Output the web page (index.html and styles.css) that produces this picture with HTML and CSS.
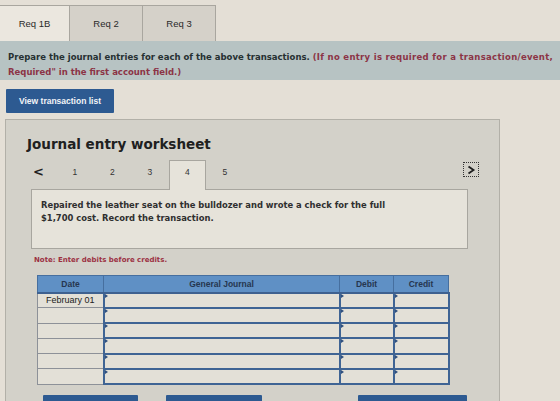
FILE: index.html
```html
<!DOCTYPE html>
<html lang="en">
<head>
<meta charset="utf-8">
<title>Journal entry worksheet</title>
<link rel="stylesheet" href="styles.css">
</head>
<body>
<div class="page">
  <nav class="req-tabs">
    <div class="req-tab active">Req 1B</div>
    <div class="req-tab">Req 2</div>
    <div class="req-tab">Req 3</div>
  </nav>

  <div class="instructions">
    <div class="line"><span class="lead">Prepare the journal entries for each of the above transactions.</span> <span class="hint wide">(If no entry is required for a transaction/event,</span></div>
    <div class="line"><span class="hint">Required" in the first account field.)</span></div>
  </div>

  <button class="btn-primary" type="button">View transaction list</button>

  <section class="worksheet">
    <h2 class="ws-title">Journal entry worksheet</h2>

    <div class="ws-nav">
      <span class="ws-prev">&lt;</span>
      <span class="ws-step">1</span>
      <span class="ws-step">2</span>
      <span class="ws-step">3</span>
      <span class="ws-step current">4</span>
      <span class="ws-step">5</span>
      <span class="ws-next">
        <svg width="10" height="10" viewBox="0 0 10 10"><path d="M2.5 1.5 L7.5 5 L2.5 8.5" fill="none" stroke="#1d1d1d" stroke-width="1.8"/></svg>
      </span>
    </div>

    <div class="ws-desc">
      Repaired the leather seat on the bulldozer and wrote a check for the full<br>
      $1,700 cost. Record the transaction.
    </div>

    <p class="ws-note">Note: Enter debits before credits.</p>

    <table class="journal">
      <colgroup>
        <col class="c-date"><col class="c-acct"><col class="c-num"><col class="c-num2">
      </colgroup>
      <thead>
        <tr><th>Date</th><th>General Journal</th><th>Debit</th><th>Credit</th></tr>
      </thead>
      <tbody>
        <tr><td class="date">February 01</td><td class="in"></td><td class="in"></td><td class="in"></td></tr>
        <tr><td class="date"></td><td class="in"></td><td class="in"></td><td class="in"></td></tr>
        <tr><td class="date"></td><td class="in"></td><td class="in"></td><td class="in"></td></tr>
        <tr><td class="date"></td><td class="in"></td><td class="in"></td><td class="in"></td></tr>
        <tr><td class="date"></td><td class="in"></td><td class="in"></td><td class="in"></td></tr>
        <tr><td class="date"></td><td class="in"></td><td class="in"></td><td class="in"></td></tr>
      </tbody>
    </table>

    <div class="ws-actions">
      <span class="act act-a"></span>
      <span class="act act-b"></span>
      <span class="act act-c"></span>
    </div>
  </section>
</div>
</body>
</html>
```

FILE: styles.css
```css
* { box-sizing: border-box; }

html, body {
  margin: 0;
  padding: 0;
}

body {
  width: 560px;
  height: 401px;
  overflow: hidden;
  background: #e4dfd6;
  font-family: "DejaVu Sans", Verdana, sans-serif;
  color: #222;
}

.page {
  width: 560px;
}

/* requirement tabs */
.req-tabs {
  display: flex;
  padding-top: 5px;
  height: 41px;
}

.req-tab {
  width: 74px;
  height: 36px;
  display: flex;
  align-items: center;
  justify-content: center;
  font-family: "Liberation Sans", Arial, sans-serif;
  font-size: 9.5px;
  color: #2a2a2a;
  background: #d5d1c9;
  border: 1px solid #a9a69f;
  border-bottom: none;
  margin-left: -1px;
}

.req-tab.active {
  width: 71px;
  background: #ebe7df;
}

/* instruction strip */
.instructions {
  width: 560px;
  height: 39px;
  padding: 9px 0 0 8px;
  background: #b7c3c3;
  font-size: 8.5px;
  font-weight: bold;
  line-height: 15px;
}

.instructions .line {
  white-space: nowrap;
}

.lead { color: #263032; }
.hint { color: #8c3446; }
.hint.wide { letter-spacing: 0.3px; }

.btn-primary {
  display: block;
  margin: 9px 0 0 6px;
  width: 108px;
  height: 24px;
  padding: 0;
  border: none;
  border-radius: 1px;
  background: #2d5a91;
  color: #f2f4f7;
  font-family: "Liberation Sans", Arial, sans-serif;
  font-weight: bold;
  font-size: 8.5px;
}

/* worksheet panel */
.worksheet {
  margin: 6px 0 0 5px;
  width: 495px;
  height: 300px;
  padding: 15px 0 0 25px;
  background: #d3d1c9;
  border: 1px solid #b2b0a8;
}

.ws-title {
  margin: 0 0 0 -4px;
  font-size: 13.5px;
  line-height: 18px;
  font-weight: bold;
  color: #202020;
}

.ws-nav {
  display: flex;
  align-items: stretch;
  width: 448px;
  height: 29px;
  margin-top: 7px;
  font-family: "Liberation Sans", Arial, sans-serif;
  font-size: 8.5px;
  color: #333;
}

.ws-prev {
  width: 25px;
  padding: 5px 0 0 2px;
  font-family: "DejaVu Sans", sans-serif;
  font-size: 13px;
  line-height: 14px;
  font-weight: bold;
  color: #222;
}

.ws-step {
  width: 37.5px;
  padding-top: 7px;
  text-align: center;
  line-height: 10px;
}

.ws-step.current {
  background: #e6e3da;
  border: 1px solid #a8a69f;
  border-bottom: none;
  padding-top: 6px;
  position: relative;
  z-index: 1;
  margin-bottom: -1px;
}

.ws-next {
  margin-left: auto;
  margin-top: 2px;
  align-self: flex-start;
  width: 16px;
  height: 15px;
  display: flex;
  align-items: center;
  justify-content: center;
  border: 1.5px dotted #333;
}

.ws-desc {
  width: 437px;
  height: 60px;
  padding: 9px 9px 0;
  background: #e6e3da;
  border: 1px solid #a8a69f;
  font-size: 8.4px;
  font-weight: bold;
  line-height: 13px;
  color: #2f2f2f;
}

.ws-note {
  margin: 5px 0 0 3px;
  font-size: 7px;
  line-height: 12px;
  font-weight: bold;
  color: #9c3042;
}

/* journal grid */
.journal {
  margin: 9px 0 0 6px;
  width: 411px;
  border-collapse: collapse;
  table-layout: fixed;
  font-family: "Liberation Sans", Arial, sans-serif;
}

.c-date { width: 66px; }
.c-acct { width: 236px; }
.c-num { width: 54px; }
.c-num2 { width: 55px; }

.journal th {
  height: 17px;
  padding: 0;
  background: #5f90c5;
  color: #26364f;
  font-size: 8.5px;
  font-weight: bold;
  border: 1px solid #466f9f;
  border-bottom: 2px solid #3e6190;
}

.journal td {
  height: 15.3px;
  padding: 0;
  background: #e3e0d7;
}

.journal td.date {
  border: 1px solid #8d9198;
  font-size: 9px;
  color: #222;
  text-align: center;
}

.journal td.in {
  position: relative;
  border: 2px solid #3f6494;
}

/* dropdown marker in the corner of each entry cell */
.journal td.in::before {
  content: "";
  position: absolute;
  left: 0;
  top: 0;
  border-top: 2px solid transparent;
  border-bottom: 2px solid transparent;
  border-left: 3px solid #2e4f7e;
}

.ws-actions {
  display: flex;
  margin-top: 10px;
  padding-left: 12px;
}

.act {
  height: 20px;
  background: #2d5a91;
  border-radius: 1px;
}

.act-a { width: 95px; }
.act-b { width: 96px; margin-left: 28px; }
.act-c { width: 109px; margin-left: 96px; }
```
